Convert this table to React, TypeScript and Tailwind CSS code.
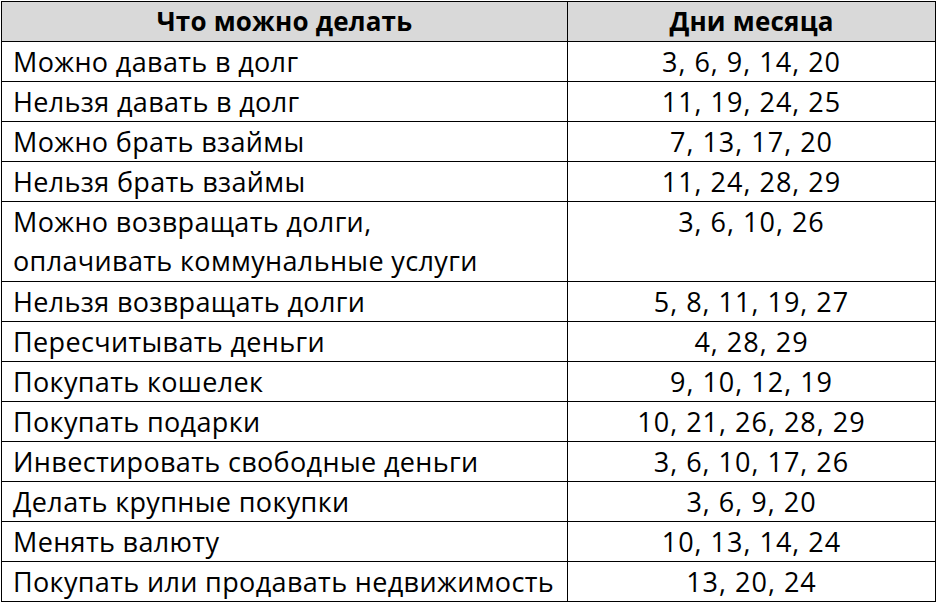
const ROWS: [string[], string][] = [
  [["Можно давать в долг"], "3, 6, 9, 14, 20"],
  [["Нельзя давать в долг"], "11, 19, 24, 25"],
  [["Можно брать взаймы"], "7, 13, 17, 20"],
  [["Нельзя брать взаймы"], "11, 24, 28, 29"],
  [["Можно возвращать долги,", "оплачивать коммунальные услуги"], "3, 6, 10, 26"],
  [["Нельзя возвращать долги"], "5, 8, 11, 19, 27"],
  [["Пересчитывать деньги"], "4, 28, 29"],
  [["Покупать кошелек"], "9, 10, 12, 19"],
  [["Покупать подарки"], "10, 21, 26, 28, 29"],
  [["Инвестировать свободные деньги"], "3, 6, 10, 17, 26"],
  [["Делать крупные покупки"], "3, 6, 9, 20"],
  [["Менять валюту"], "10, 13, 14, 24"],
  [["Покупать или продавать недвижимость"], "13, 20, 24"],
];

export default function App() {
  return (
    <div className="w-[937px] h-[603px] bg-white pl-px pt-px font-['Open_Sans',sans-serif] text-black">
      <table className="w-[935px] border-collapse table-fixed">
        <colgroup>
          <col className="w-[566px]" />
          <col />
        </colgroup>
        <thead>
          <tr className="bg-[#d9d9d9] text-[26px] tracking-[0.2px]">
            <th className="border border-black leading-[39px] font-bold text-center align-top">Что можно делать</th>
            <th className="border border-black leading-[39px] font-bold text-center align-top">Дни месяца</th>
          </tr>
        </thead>
        <tbody className="text-[27px]">
          {ROWS.map(([label, days], i) => (
            <tr key={i}>
              <td className="border border-black align-top pl-[11px] leading-[39px] whitespace-nowrap tracking-[0.35px]">
                {label.map((l, j) => (
                  <div key={j} className={j > 0 ? "leading-[40px]" : ""}>{l}</div>
                ))}
              </td>
              <td className="border border-black align-top text-center leading-[39px] tracking-[1px]">{days}</td>
            </tr>
          ))}
        </tbody>
      </table>
    </div>
  );
}
